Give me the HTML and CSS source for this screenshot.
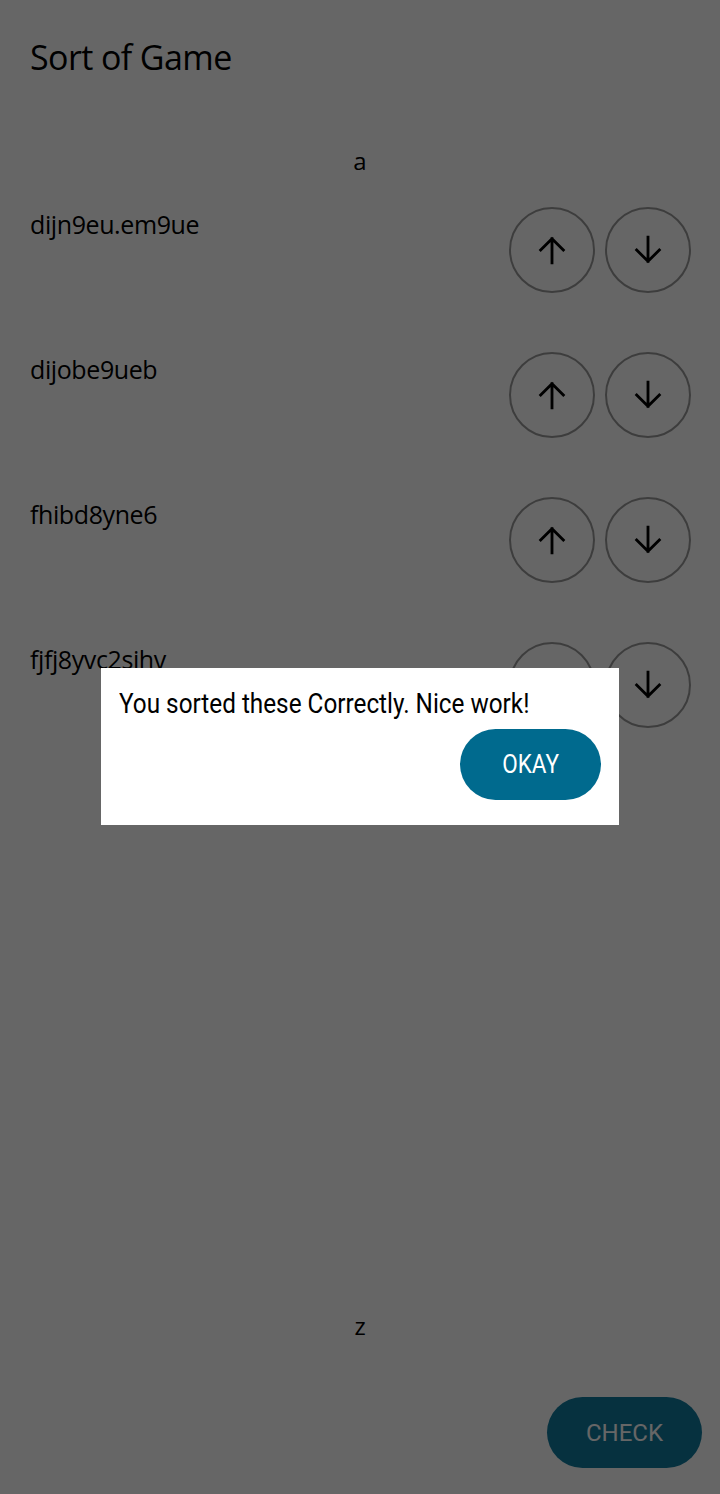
FILE: index.html
```html
<!DOCTYPE html>
<html>
<head>
<meta charset="utf-8">
<link rel="stylesheet" href="styles.css">
</head>
<body>
<div class="page">
  <h1 class="title">Sort of Game</h1>
  <div class="edge edge-top">a</div>
  <div class="list">
    <div class="row">
      <div class="label">dijn9eu.em9ue</div>
      <div class="btns">
        <button class="circle"><svg class="arrow" viewBox="0 0 24 24"><path d="M12 21V4M4 12L12 4l8 8" fill="none" stroke="#000" stroke-width="2" stroke-linecap="square"/></svg></button>
        <button class="circle"><svg class="arrow" viewBox="0 0 24 24"><path d="M12 3v17M4 12l8 8 8-8" fill="none" stroke="#000" stroke-width="2" stroke-linecap="square"/></svg></button>
      </div>
    </div>
    <div class="row">
      <div class="label">dijobe9ueb</div>
      <div class="btns">
        <button class="circle"><svg class="arrow" viewBox="0 0 24 24"><path d="M12 21V4M4 12L12 4l8 8" fill="none" stroke="#000" stroke-width="2" stroke-linecap="square"/></svg></button>
        <button class="circle"><svg class="arrow" viewBox="0 0 24 24"><path d="M12 3v17M4 12l8 8 8-8" fill="none" stroke="#000" stroke-width="2" stroke-linecap="square"/></svg></button>
      </div>
    </div>
    <div class="row">
      <div class="label">fhibd8yne6</div>
      <div class="btns">
        <button class="circle"><svg class="arrow" viewBox="0 0 24 24"><path d="M12 21V4M4 12L12 4l8 8" fill="none" stroke="#000" stroke-width="2" stroke-linecap="square"/></svg></button>
        <button class="circle"><svg class="arrow" viewBox="0 0 24 24"><path d="M12 3v17M4 12l8 8 8-8" fill="none" stroke="#000" stroke-width="2" stroke-linecap="square"/></svg></button>
      </div>
    </div>
    <div class="row">
      <div class="label">fjfj8yvc2sihv</div>
      <div class="btns">
        <button class="circle"><svg class="arrow" viewBox="0 0 24 24"><path d="M12 21V4M4 12L12 4l8 8" fill="none" stroke="#000" stroke-width="2" stroke-linecap="square"/></svg></button>
        <button class="circle"><svg class="arrow" viewBox="0 0 24 24"><path d="M12 3v17M4 12l8 8 8-8" fill="none" stroke="#000" stroke-width="2" stroke-linecap="square"/></svg></button>
      </div>
    </div>
  </div>
  <div class="edge edge-bottom">z</div>
  <div class="footer">
    <button class="check">CHECK</button>
  </div>
</div>
<div class="overlay"></div>
<div class="dialog">
  <p class="msg"><span class="narrow">You sorted these Correctly. Nice work!</span></p>
  <div class="actions">
    <button class="okay"><span class="narrow">OKAY</span></button>
  </div>
</div>
</body>
</html>
```
FILE: styles.css
```css
* { box-sizing: border-box; }
html, body {
  margin: 0;
  padding: 0;
  width: 720px;
  height: 1494px;
  overflow: hidden;
  background: #fff;
}
body {
  font-family: "Open Sans", "Noto Sans", sans-serif;
  color: #000;
  position: relative;
}
.page {
  height: 1494px;
  display: flex;
  flex-direction: column;
}
.title {
  margin: 0;
  padding: 34px 30px 0;
  font-size: 34px;
  font-weight: 500;
  line-height: 46px;
  letter-spacing: -0.6px;
}
.edge {
  text-align: center;
  font-size: 24px;
  line-height: 30px;
  font-weight: 500;
}
.edge-top {
  margin-top: 66px;
}
.list {
  display: flex;
  flex-direction: column;
  gap: 59px;
  margin-top: 31px;
}
.row {
  display: flex;
  justify-content: space-between;
  align-items: flex-start;
  padding: 0 30px 0 30px;
  height: 86px;
}
.label {
  font-size: 25px;
  line-height: 34px;
  font-weight: 500;
  letter-spacing: -0.4px;
}
.btns {
  display: flex;
  gap: 10px;
  margin-right: -1px;
}
.circle {
  width: 86px;
  height: 86px;
  border-radius: 50%;
  border: 2px solid #9a9a9a;
  background: transparent;
  display: flex;
  align-items: center;
  justify-content: center;
  padding: 0;
}
.arrow {
  width: 34px;
  height: 34px;
}
.edge-bottom {
  margin-top: auto;
  margin-bottom: 56px;
}
.footer {
  display: flex;
  justify-content: flex-end;
  padding: 0 18px 26px;
}
.check {
  width: 155px;
  height: 71px;
  border-radius: 36px;
  border: none;
  background: #0f7a9e;
  color: #fff;
  font-family: Roboto, sans-serif;
  font-size: 24px;
  font-weight: 400;
}
.overlay {
  position: absolute;
  inset: 0;
  background: rgba(0, 0, 0, 0.6);
}
.dialog {
  position: absolute;
  left: 101px;
  top: 668px;
  width: 518px;
  height: 157px;
  background: #fff;
  padding: 18px 18px 25px;
  display: flex;
  flex-direction: column;
}
.narrow {
  display: inline-block;
  transform: scaleX(0.9);
  transform-origin: left center;
  white-space: nowrap;
}
.msg {
  margin: 0;
  font-family: Roboto, sans-serif;
  font-size: 27px;
  line-height: 36px;
  color: #000;
}
.actions {
  display: flex;
  justify-content: flex-end;
  margin-top: auto;
}
.okay {
  width: 141px;
  height: 71px;
  border-radius: 36px;
  border: none;
  background: #006a8e;
  color: #fff;
  font-family: Roboto, sans-serif;
  font-size: 25px;
  font-weight: 400;
  display: flex;
  align-items: center;
  justify-content: center;
}
.okay .narrow {
  transform-origin: center center;
}
```
